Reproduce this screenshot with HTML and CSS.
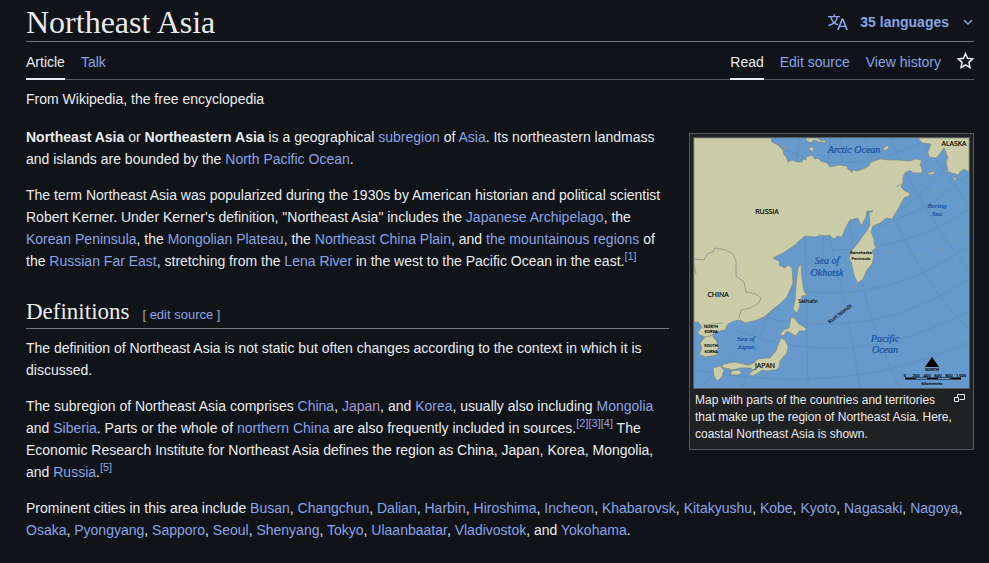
FILE: index.html
```html
<!DOCTYPE html>
<html lang="en">
<head>
<meta charset="utf-8">
<title>Northeast Asia - Wikipedia</title>
<link rel="stylesheet" href="styles.css">
</head>
<body>
<main class="page">
  <header class="title-bar">
    <h1>Northeast Asia</h1>
    <button class="languages" type="button">
      <svg class="lang-icon" viewBox="0 0 20 20" aria-hidden="true"><path d="M20 18h-1.44a.6.6 0 0 1-.4-.12.8.8 0 0 1-.23-.31L17 15h-5l-1 2.54a.8.8 0 0 1-.22.3.6.6 0 0 1-.4.14H9l4.55-11.47h1.89zm-3.53-4.31L14.89 9.5a12 12 0 0 1-.39-1.24q-.09.37-.19.69l-.19.56-1.58 4.19zm-6.3-1.58a13.4 13.4 0 0 1-2.91-1.41 11.46 11.46 0 0 0 2.81-5.37H12V4H7.31a4 4 0 0 0-.2-.56C6.87 2.79 6.6 2 6.6 2l-1.47.5s.4.89.6 1.5H0v1.33h2.15A11.23 11.23 0 0 0 5 10.7a17.2 17.2 0 0 1-5 2.1q.56.82.87 1.38a23.3 23.3 0 0 0 5.22-2.51 15.6 15.6 0 0 0 3.56 1.77zM3.63 5.33h4.91a8.1 8.1 0 0 1-2.45 4.45 9.1 9.1 0 0 1-2.46-4.45"/></svg>
      <span>35 languages</span>
      <svg class="chevron" viewBox="0 0 10 10" aria-hidden="true"><path d="M1 3l4 4 4-4"/></svg>
    </button>
  </header>
  <nav class="tabs" aria-label="Page tools">
    <a class="tab current" href="#">Article</a>
    <a class="tab" href="#">Talk</a>
    <span class="spacer"></span>
    <a class="tab current" href="#">Read</a>
    <a class="tab" href="#">Edit source</a>
    <a class="tab" href="#">View history</a>
    <a class="watch" href="#" aria-label="Watch"><svg viewBox="1 1 18 18" aria-hidden="true"><path d="M10 2.800l2.200 4.900 5.400.6-4 3.700 1.100 5.300L10 14.600l-4.700 2.700 1.100-5.300-4-3.700 5.400-.6z"/></svg></a>
  </nav>
  <p class="tagline">From Wikipedia, the free encyclopedia</p>
  <article class="content">
    <figure class="thumb">
      <svg class="map" viewBox="694 138 275 250" role="img" aria-label="Map of Northeast Asia">
        <rect class="sea" x="694" y="138" width="275" height="250"/>
        <g class="grid">
          <path d="M800 138L786 220M830 138L822 260L700 388M865 138Q900 260 969 330M890 138Q920 210 969 270M920 138L969 205M840 138Q850 290 900 388M805 230L808 388M770 310L742 388M830 240Q850 320 860 388"/>
          <path d="M694 370Q850 398 969 342M735 330Q850 375 969 311M755 315Q870 345 969 279M790 290Q890 305 969 245M830 250Q910 250 969 209M870 228Q930 212 969 174M894 215Q935 185 952 160M780 148Q850 182 930 138"/>
        </g>
        <g class="land">
          <path d="M694 138H771L772 142L778 145L783 150L784 155L786 156L788 162L792 160L797 162L802 162L803 159L806 160V157L812 155L815 159L818 158L821 161L827 163L830 167L839 165L847 166L848 169L852 173V170L858 171L865 168L869 166L871 162L880 159L890 160L899 160L910 161L915 159L922 160L920 165L922 168V173L913 173L910 170L905 173L903 177V183L901 187L905 191L910 193L909 196L904 198L898 209L892 219L887 218L880 223L873 226L871 232L874 239L874 243L876 248L872 251L874 256L872 264L867 270L863 279L858 283L855 278L851 262L849 258L852 250L858 243L862 237L866 232L870 225L869 213L873 211H867L866 217L861 226L858 218L850 220L845 229L842 237L837 236L835 239L832 238L830 235L825 236L820 235L816 237L805 236L799 241L795 245L783 253L773 258L780 262L779 265L785 268L788 265L792 268L793 283L787 297L780 304L772 310L764 317L757 320L745 323L740 320L734 321L728 324L725 330L715 332L712 335L717 342L718 349L717 355L705 357L702 355L699 356L702 348L700 343L705 337L698 334L698 332L702 327L698 322H694Z"/>
          <path d="M798 268L801 264L802 279L804 291L807 295L802 296L799 308L797 313L793 309L795 301L796 284Z"/>
          <path d="M791 317L794 318L799 324L806 328V331L799 331L796 336L787 331L783 336L780 334L784 330L789 328Z"/>
          <path d="M781 338L785 340L788 346L787 353L780 361L779 367L776 370L772 370L767 371L762 370L758 373L752 376L749 374L754 370L750 368L740 368L733 370L721 367L724 364L735 362L748 365L754 363L758 359L765 358L770 358L776 351L778 345Z"/>
          <path d="M713 368L720 366L724 370L722 377L717 381L714 376ZM731 371L739 370L742 373L738 375L731 375Z"/>
          <path d="M806 138H817L822 141L826 140L825 143L819 142L814 140L810 143L806 140ZM810 147L814 148L813 152L809 149ZM883 149L888 145L889 148L884 151Z"/>
          <path d="M918 138H969V172L964 169L960 172L958 175L952 173L948 172L946 161L948 158L944 148L939 155L936 158L929 157L928 152L931 144L922 143ZM953 178L957 177L955 181ZM928 173L935 171L934 174L929 175Z"/>
          <path class="islands" d="M852 288l4-3M847 297l2-3M839 309l2-1M828 317l4-3M818 322l5-2M810 325l5-3M886 251l7 2M916 255l4 1M936 251l7-1M952 243l5-4M959 237l7-6M935 191l4-1M712 384l3 2M708 368l2-1"/>
        </g>
        <path class="frontier" d="M694 259L704 260L707 254L713 252L715 248L726 250L733 254L736 261V276L744 282L746 292L756 294L761 298L759 303L750 308L741 310L739 318M694 264L696 274M703 325L723 323M705 337L714 335M783 151L785 148L782 145M896 187L902 184L904 187"/>
        <g class="country">
          <text x="767" y="214">RUSSIA</text><text x="718" y="297">CHINA</text><text x="954" y="146">ALASKA</text><text x="765" y="368">JAPAN</text>
        </g>
        <g class="place">
          <text x="711" y="328">NORTH</text><text x="711" y="333">KOREA</text><text x="711" y="347">SOUTH</text><text x="711" y="353">KOREA</text><text x="861" y="254">Kamchatka</text><text x="861" y="260">Peninsula</text>
          <text class="mid" x="808" y="303">Sakhalin</text><text class="mid" transform="translate(841 315) rotate(-38)">Kuril Islands</text>
        </g>
        <g class="water">
          <text x="854" y="153">Arctic Ocean</text><text x="827" y="264">Sea of</text><text x="827" y="276">Okhotsk</text><text x="885" y="342">Pacific</text><text x="885" y="353">Ocean</text>
          <g class="small"><text x="937" y="208">Bering</text><text x="937" y="216">Sea</text><text x="746" y="341">Sea of</text><text x="746" y="349">Japan</text></g>
        </g>
        <path d="M925 367L932 357L939 367Z"/>
        <path class="scale" d="M905 378.500H961"/><path class="scale-gap" d="M916 378.500h11M938 378.500h12"/>
        <g class="place"><text x="932" y="371">NORTH</text><text x="905" y="377">0</text><text x="916" y="377">200</text><text x="927" y="377">400</text><text x="938" y="377">600</text><text x="949" y="377">800</text><text x="961" y="377">1,000</text><text x="932" y="385">Kilometres</text></g>
      </svg>
      <figcaption>
        <a class="enlarge" href="#" aria-label="Enlarge"><svg viewBox="0 0 11 8" aria-hidden="true"><path d="M3.500 3.500v-3h7v5h-5M.500 3.500h4v4h-4z"/></svg></a>
        Map with parts of the countries and territories that make up the region of Northeast Asia. Here, coastal Northeast Asia is shown.
      </figcaption>
    </figure>
    <p><b>Northeast Asia</b> or <b>Northeastern Asia</b> is a geographical <a href="#">subregion</a> of <a href="#">Asia</a>. Its northeastern landmass and islands are bounded by the <a href="#">North Pacific Ocean</a>.</p>
    <p>The term Northeast Asia was popularized during the 1930s by American historian and political scientist Robert Kerner. Under Kerner's definition, "Northeast Asia" includes the <a href="#">Japanese Archipelago</a>, the <a href="#">Korean Peninsula</a>, the <a href="#">Mongolian Plateau</a>, the <a href="#">Northeast China Plain</a>, and <a href="#">the mountainous regions</a> of the <a href="#">Russian Far East</a>, stretching from the <a href="#">Lena River</a> in the west to the Pacific Ocean in the east.<sup><a href="#">[1]</a></sup></p>
    <div class="section-head">
      <h2>Definitions</h2>
      <span class="edit">[ <a href="#">edit source</a> ]</span>
    </div>
    <p>The definition of Northeast Asia is not static but often changes according to the context in which it is discussed.</p>
    <p>The subregion of Northeast Asia comprises <a href="#">China</a>, <a class="visited" href="#">Japan</a>, and <a href="#">Korea</a>, usually also including <a href="#">Mongolia</a> and <a href="#">Siberia</a>. Parts or the whole of <a href="#">northern China</a> are also frequently included in sources.<sup><a href="#">[2]</a><a href="#">[3]</a><a href="#">[4]</a></sup> The Economic Research Institute for Northeast Asia defines the region as China, Japan, Korea, Mongolia, and <a href="#">Russia</a>.<sup><a href="#">[5]</a></sup></p>
    <p>Prominent cities in this area include <a href="#">Busan</a>, <a href="#">Changchun</a>, <a href="#">Dalian</a>, <a href="#">Harbin</a>, <a href="#">Hiroshima</a>, <a href="#">Incheon</a>, <a href="#">Khabarovsk</a>, <a href="#">Kitakyushu</a>, <a href="#">Kobe</a>, <a href="#">Kyoto</a>, <a href="#">Nagasaki</a>, <a href="#">Nagoya</a>, <a href="#">Osaka</a>, <a href="#">Pyongyang</a>, <a href="#">Sapporo</a>, <a href="#">Seoul</a>, <a href="#">Shenyang</a>, <a href="#">Tokyo</a>, <a href="#">Ulaanbaatar</a>, <a href="#">Vladivostok</a>, and <a href="#">Yokohama</a>.</p>
  </article>
</main>
</body>
</html>
```
FILE: styles.css
```css
* {
  box-sizing: border-box;
}

body {
  margin: 0;
  background: #101418;
  color: #eaecf0;
  font: 14px/22px "Liberation Sans", Arial, sans-serif;
}

a {
  color: #88a3e8;
  text-decoration: none;
}

a:hover {
  text-decoration: underline;
}

a.visited {
  color: #a799cd;
}

h1,
h2 {
  margin: 0;
  font-family: Georgia, "Liberation Serif", serif;
  font-weight: 400;
}

.page {
  padding: 3px 15px 0 26px;
}

.title-bar {
  display: flex;
  align-items: center;
  justify-content: space-between;
  border-bottom: 1px solid #72777d;
}

h1 {
  font-size: 32px;
  line-height: 38px;
}

.languages {
  display: flex;
  align-items: center;
  padding: 0;
  border: 0;
  background: none;
  color: #88a3e8;
  font: bold 14px/22px "Liberation Sans", Arial, sans-serif;
}

.lang-icon {
  width: 20px;
  height: 20px;
  margin-right: 12px;
  fill: currentColor;
}

.chevron {
  width: 10px;
  height: 10px;
  margin: 0 1px 0 14px;
  fill: none;
  stroke: currentColor;
  stroke-width: 1.4;
}

.tabs {
  display: flex;
  gap: 16px;
  border-bottom: 1px solid #54595d;
}

.spacer {
  flex: 1;
}

.tab {
  height: 38px;
  margin-bottom: -1px;
  padding-top: 9px;
}

.tab.current {
  border-bottom: 2px solid #eaecf0;
  color: #eaecf0;
}

.watch {
  padding-top: 10px;
  height: 37px;
}

.watch svg {
  display: block;
  width: 17px;
  height: 17px;
  fill: none;
  stroke: #eaecf0;
  stroke-width: 1.6;
}

.tagline {
  margin: 8px 0 0;
}

.content {
  padding-top: 9px;
}

.content p {
  margin: 7px 0 14px;
}

.thumb {
  float: right;
  width: 285px;
  margin: 14px 0 14px 20px;
  padding: 3px;
  border: 1px solid #54595d;
  background: #202122;
}

.map {
  display: block;
  width: 100%;
  border: 1px solid #54595d;
}

figcaption {
  padding: 3px 2px;
  font-size: 12px;
  line-height: 17px;
}

.enlarge {
  float: right;
  margin: 2px 3px 0 8px;
}

.enlarge svg {
  display: block;
  width: 11px;
  height: 8px;
  fill: none;
  stroke: #eaecf0;
}

sup {
  font-size: 11px;
  line-height: 1;
  vertical-align: super;
}

.section-head {
  display: flow-root;
  margin-bottom: 8px;
  padding-top: 10px;
  border-bottom: 1px solid #72777d;
}

h2 {
  display: inline-block;
  margin-right: 9px;
  font-size: 23px;
  line-height: 32px;
}

.edit {
  color: #a2a9b1;
  font-size: 13px;
}

.sea {
  fill: #6699cc;
}

.grid {
  fill: none;
  stroke: #5c8bb8;
  stroke-width: 1;
  opacity: 0.5;
}

.land {
  fill: #cbcca8;
  stroke: #82887a;
  stroke-width: 0.7;
  stroke-linejoin: round;
}

.islands {
  stroke: #959c88;
}

.frontier {
  fill: none;
  stroke: #9b9c89;
}

.map text {
  text-anchor: middle;
}

.country {
  font: 7px "Open Sans", sans-serif;
  stroke: #000;
  stroke-width: 0.2;
}

.place {
  font: 600 4px "Open Sans", sans-serif;
  stroke: #000;
  stroke-width: 0.1;
}

.place .mid {
  font-size: 5px;
  font-weight: 400;
}

.water {
  fill: #174f9c;
  stroke: #174f9c;
  stroke-width: 0.2;
  font: italic 10px "Liberation Serif", serif;
}

.water .small {
  font-size: 7px;
}

.scale {
  stroke: #000;
  stroke-width: 2;
}

.scale-gap {
  stroke: #6699cc;
  stroke-width: 1;
}
```
